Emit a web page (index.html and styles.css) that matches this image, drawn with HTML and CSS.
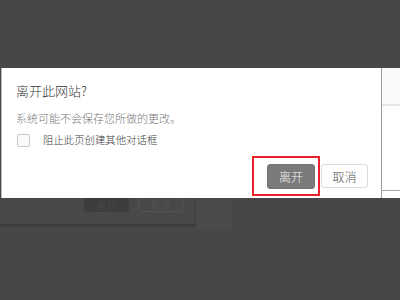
FILE: index.html
```html
<!DOCTYPE html>
<html lang="zh-CN">
<head>
<meta charset="utf-8">
<link rel="stylesheet" href="styles.css">
</head>
<body>
<div class="page">
  <div class="row">
    <div class="dialog">
      <div class="title">离开此网站?</div>
      <div class="msg">系统可能不会保存您所做的更改。</div>
      <label class="check"><span class="box"></span><span class="label">阻止此页创建其他对话框</span></label>
      <div class="actions">
        <div class="highlight"><span class="btn primary">离开</span></div>
        <span class="btn secondary">取消</span>
      </div>
    </div>
    <div class="side">
      <div class="side-top"></div>
      <div class="side-mid"></div>
      <div class="side-bot"></div>
    </div>
  </div>
  <div class="ghost">
    <div class="ghost-card">
      <span class="gbtn dark">离开</span>
      <span class="gbtn light">取消</span>
    </div>
    <div class="ghost-col"></div>
  </div>
</div>
</body>
</html>
```
FILE: styles.css
```css
html, body {
  margin: 0;
  padding: 0;
}
body {
  width: 400px;
  height: 300px;
  overflow: hidden;
  background: #474747;
  font-family: "Noto Sans CJK SC", "Noto Sans", sans-serif;
  font-weight: 300;
}
.page {
  padding-top: 68px;
}
.row {
  display: flex;
  height: 130px;
}
.dialog {
  width: 381px;
  margin-left: 1px;
  border-left: 1px solid #bdbdbd;
  border-right: 1px solid #9a9a9a;
  background: #fff;
  padding: 0 0 0 14px;
  box-sizing: border-box;
  display: flex;
  flex-direction: column;
}
.title {
  font-size: 13px;
  line-height: 16px;
  color: #3a3a3a;
  margin-top: 15px;
}
.msg {
  font-size: 11px;
  line-height: 14px;
  color: #777;
  margin-top: 12px;
}
.check {
  display: flex;
  align-items: center;
  margin-top: 8px;
}
.box {
  width: 11px;
  height: 11px;
  border: 1px solid #c8c8c8;
  border-radius: 2px;
  background: #fafafa;
  margin-left: 1px;
}
.label {
  font-size: 10.4px;
  color: #3a3a3a;
  margin-left: 13px;
  line-height: 14px;
}
.actions {
  display: flex;
  justify-content: flex-end;
  align-items: center;
  padding-right: 13px;
  margin-top: 9px;
}
.highlight {
  border: 2px solid #e8212b;
  padding: 6px 3px 5px 13px;
  display: flex;
  margin-right: 1px;
}
.btn {
  display: flex;
  align-items: center;
  justify-content: center;
  box-sizing: border-box;
  height: 25px;
  width: 48px;
  font-size: 12px;
  border-radius: 3px;
}
.primary {
  background: #7a7a7a;
  color: #f4f4f4;
  border: 1px solid #747474;
}
.secondary {
  background: #fff;
  color: #555;
  border: 1.5px solid #dcdcdc;
  width: 47px;
  height: 24px;
}
.side {
  flex: 1;
  display: flex;
  flex-direction: column;
}
.side-top {
  height: 36px;
  background: #fafafa;
  border-bottom: 2px solid #e6e6e6;
}
.side-mid {
  flex: 1;
  background: #fff;
  border-bottom: 1px solid #a8a8a8;
}
.side-bot {
  height: 7px;
  background: #fff;
}
.ghost {
  display: flex;
  height: 32px;
}
.ghost-card {
  width: 196px;
  height: 27px;
  border-right: 1px solid #3e3e3e;
  border-bottom: 1px solid #3b3b3b;
  box-shadow: 1px 1px 2px rgba(0,0,0,0.2);
  background: #484848;
  display: flex;
  align-items: flex-start;
  padding-left: 84px;
  box-sizing: border-box;
  gap: 9px;
  font-size: 10px;
}
.gbtn {
  width: 45px;
  height: 14px;
  display: flex;
  justify-content: center;
  align-items: center;
  border-radius: 0 0 2px 2px;
  box-sizing: border-box;
}
.dark {
  background: #3d3d3d;
  color: #484848;
}
.light {
  border: 1px solid #525252;
  border-top: none;
  color: #555;
}
.ghost-col {
  width: 36px;
  background: #4a4a4a;
}
```
